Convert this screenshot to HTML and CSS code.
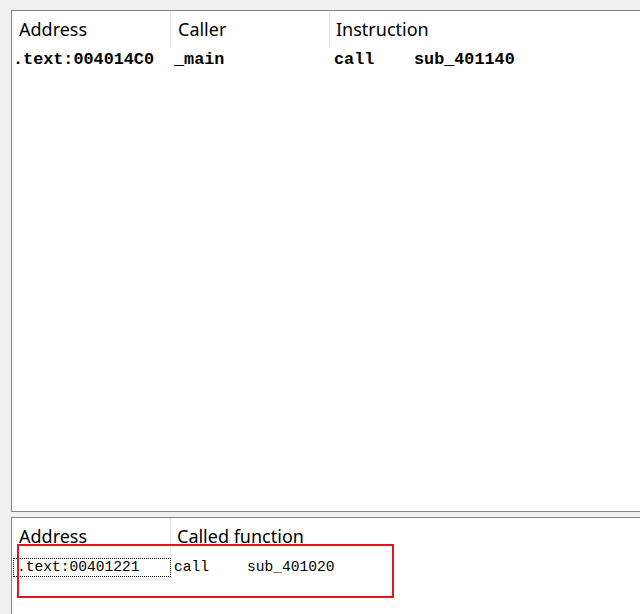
FILE: index.html
```html
<!DOCTYPE html>
<html>
<head>
<meta charset="utf-8">
<link rel="stylesheet" href="styles.css">
</head>
<body>
<div class="app">
  <div class="panel top">
    <div class="header">
      <div class="col c1">Address</div>
      <div class="col c2">Caller</div>
      <div class="col c3">Instruction</div>
    </div>
    <div class="row bold">
      <div class="cell addr">.text:004014C0</div>
      <div class="cell caller">_main</div>
      <div class="cell instr"><span class="op">call</span><span>sub_401140</span></div>
    </div>
  </div>
  <div class="panel bottom">
    <div class="header">
      <div class="col c1">Address</div>
      <div class="col c2b">Called function</div>
    </div>
    <div class="row light">
      <div class="cell focus">.text:00401221</div>
      <div class="cell callcell"><span class="op2">call</span><span>sub_401020</span></div>
    </div>
  </div>
  <div class="mark"></div>
</div>
</body>
</html>
```
FILE: styles.css
```css
html, body {
  margin: 0;
  padding: 0;
  background: #f0f0f0;
}
.app {
  position: relative;
  width: 640px;
  height: 614px;
  display: flex;
  flex-direction: column;
  padding: 10px 0 0 11px;
  box-sizing: border-box;
  gap: 5px;
  overflow: hidden;
}
.panel {
  background: #fff;
  border: 1px solid #848484;
  border-right: none;
}
.panel.top {
  height: 500px;
}
.panel.bottom {
  flex: 1;
  border-bottom: none;
}
.header {
  display: flex;
  height: 37px;
  font-family: "Noto Sans", sans-serif;
  font-size: 18px;
  color: #000;
}
.col {
  box-sizing: border-box;
  padding: 6px 0 0 7px;
  border-right: 1px solid #e5e5e5;
}
.c1 { width: 159px; }
.c2 { width: 159px; }
.c3 { border-right: none; padding-left: 6px; }
.c2b { border-right: none; padding-left: 6px; }
.row {
  display: flex;
  align-items: center;
}
.cell {
  box-sizing: border-box;
}
.row.bold {
  font-family: "Liberation Mono", "Courier New", monospace;
  font-weight: bold;
  font-size: 16.8px;
  height: 22px;
}
.row.bold .addr { padding-left: 1px; width: 161px; }
.row.bold .caller { width: 160px; padding-left: 1px; }
.row.bold .instr { padding-left: 1px; }
.row.bold .op { display: inline-block; width: 80px; }
.row.light {
  font-family: "Liberation Mono", "Courier New", monospace;
  font-size: 14.6px;
  height: 20px;
  margin-top: 2px;
}
.focus {
  height: 19px;
  width: 158px;
  margin-left: 1px;
  border: 1px dotted #000;
  padding-left: 3px;
  line-height: 17px;
}
.callcell { padding-left: 3px; }
.op2 { display: inline-block; width: 73px; }
.mark {
  position: absolute;
  left: 17px;
  top: 544px;
  width: 377px;
  height: 54px;
  box-sizing: border-box;
  border: 2px solid #e8141c;
}
```
